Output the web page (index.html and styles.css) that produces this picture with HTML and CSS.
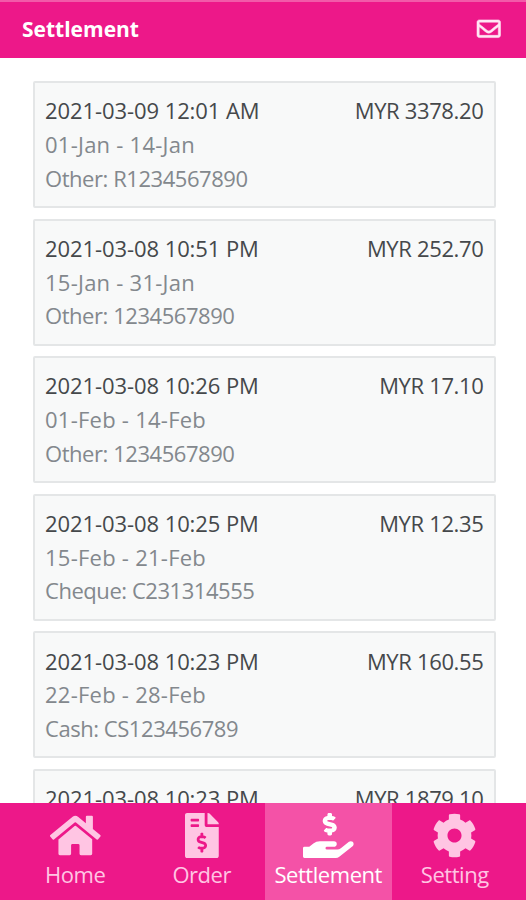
FILE: index.html
```
<!DOCTYPE html>
<html lang="en">
<head>
    <meta charset="UTF-8">
    <meta name="viewport" content="width=device-width, initial-scale=1.0">
    <title>Settlement</title>
    <link rel="stylesheet" href="styles.css">
</head>
<body>

<header class="topbar">
    <h1>Settlement</h1>
    <svg class="mail-icon" viewBox="0 0 512 512"><path d="M464 64H48C21.49 64 0 85.49 0 112v288c0 26.51 21.49 48 48 48h416c26.51 0 48-21.49 48-48V112c0-26.51-21.49-48-48-48zm0 48v40.805c-22.422 18.259-58.168 46.651-134.587 106.49-16.841 13.247-50.201 45.072-73.413 44.701-23.208.375-56.579-31.459-73.413-44.701C106.18 199.465 70.425 171.067 48 152.805V112h416zM48 400V214.398c22.914 18.251 55.409 43.862 104.938 82.646 21.857 17.205 60.134 55.186 103.062 54.955 42.717.231 80.509-37.199 103.053-54.947 49.528-38.783 82.032-64.401 104.947-82.653V400H48z"/></svg>
</header>

<main class="list">
    <div class="card">
        <div class="row"><span class="date">2021-03-09 12:01 AM</span><span class="amount">MYR 3378.20</span></div>
        <div class="period">01-Jan - 14-Jan</div>
        <div class="ref">Other: R1234567890</div>
    </div>
    <div class="card">
        <div class="row"><span class="date">2021-03-08 10:51 PM</span><span class="amount">MYR 252.70</span></div>
        <div class="period">15-Jan - 31-Jan</div>
        <div class="ref">Other: 1234567890</div>
    </div>
    <div class="card">
        <div class="row"><span class="date">2021-03-08 10:26 PM</span><span class="amount">MYR 17.10</span></div>
        <div class="period">01-Feb - 14-Feb</div>
        <div class="ref">Other: 1234567890</div>
    </div>
    <div class="card">
        <div class="row"><span class="date">2021-03-08 10:25 PM</span><span class="amount">MYR 12.35</span></div>
        <div class="period">15-Feb - 21-Feb</div>
        <div class="ref">Cheque: C231314555</div>
    </div>
    <div class="card">
        <div class="row"><span class="date">2021-03-08 10:23 PM</span><span class="amount">MYR 160.55</span></div>
        <div class="period">22-Feb - 28-Feb</div>
        <div class="ref">Cash: CS123456789</div>
    </div>
    <div class="card">
        <div class="row"><span class="date">2021-03-08 10:23 PM</span><span class="amount">MYR 1879.10</span></div>
    </div>
</main>

<nav class="tabbar">
    <a class="tab">
        <svg viewBox="0 0 576 512"><path d="M280.37 148.26L96 300.11V464a16 16 0 0 0 16 16l112.06-.29a16 16 0 0 0 15.92-16V368a16 16 0 0 1 16-16h64a16 16 0 0 1 16 16v95.64a16 16 0 0 0 16 16.05L464 480a16 16 0 0 0 16-16V300L295.67 148.26a12.19 12.19 0 0 0-15.3 0zM571.6 251.47L488 182.56V44.05a12 12 0 0 0-12-12h-56a12 12 0 0 0-12 12v72.61L318.47 43a48 48 0 0 0-61 0L4.34 251.47a12 12 0 0 0-1.6 16.9l25.5 31A12 12 0 0 0 45.15 301l235.22-193.74a12.19 12.19 0 0 1 15.3 0L530.9 301a12 12 0 0 0 16.9-1.6l25.5-31a12 12 0 0 0-1.7-16.93z"/></svg>
        <span>Home</span>
    </a>
    <a class="tab">
        <svg viewBox="0 0 384 512"><path d="M377 105L279.1 7c-4.5-4.5-10.6-7-17-7H256v128h128v-6.1c0-6.3-2.5-12.4-7-16.9zm-153 31V0H24C10.7 0 0 10.7 0 24v464c0 13.3 10.7 24 24 24h336c13.3 0 24-10.7 24-24V160H248c-13.2 0-24-10.8-24-24zM64 72c0-4.42 3.58-8 8-8h80c4.42 0 8 3.58 8 8v16c0 4.42-3.58 8-8 8H72c-4.42 0-8-3.58-8-8V72zm0 80v-16c0-4.42 3.58-8 8-8h80c4.42 0 8 3.58 8 8v16c0 4.42-3.58 8-8 8H72c-4.42 0-8-3.58-8-8zm144 263.88V440c0 4.42-3.58 8-8 8h-16c-4.42 0-8-3.58-8-8v-24.29c-11.29-.58-22.27-4.52-31.37-11.35-3.9-2.93-4.1-8.77-.57-12.14l11.75-11.21c2.77-2.64 6.89-2.76 10.13-.73 3.87 2.42 8.26 3.72 12.82 3.72h28.11c6.5 0 11.8-5.92 11.8-13.19 0-5.95-3.61-11.19-8.77-12.73l-45-13.5c-18.59-5.58-31.58-23.42-31.58-43.39 0-24.52 19.05-44.44 42.67-45.07V232c0-4.42 3.58-8 8-8h16c4.42 0 8 3.58 8 8v24.29c11.29.58 22.27 4.51 31.37 11.35 3.9 2.93 4.1 8.77.57 12.14l-11.75 11.21c-2.77 2.64-6.89 2.76-10.13.73-3.87-2.43-8.26-3.72-12.82-3.72h-28.11c-6.5 0-11.8 5.92-11.8 13.19 0 5.95 3.61 11.19 8.77 12.73l45 13.5c18.59 5.58 31.58 23.42 31.58 43.39 0 24.53-19.05 44.44-42.67 45.07z"/></svg>
        <span>Order</span>
    </a>
    <a class="tab active">
        <svg viewBox="0 0 576 512"><path d="M271.06,144.3l54.27,14.3a8.59,8.59,0,0,1,6.63,8.1c0,4.6-4.09,8.4-9.12,8.4h-35.6a30,30,0,0,1-11.19-2.2c-5.24-2.2-11.28-1.7-15.3,2l-19,17.5a11.68,11.68,0,0,0-2.25,2.66,11.42,11.42,0,0,0,3.88,15.74,83.77,83.77,0,0,0,34.51,11.5V240c0,8.8,7.83,16,17.37,16h17.37c9.55,0,17.38-7.2,17.38-16V222.4c32.93-3.6,57.84-31,53.5-63-3.15-23-22.46-41.3-46.56-47.7L282.68,97.4a8.59,8.59,0,0,1-6.63-8.1c0-4.6,4.09-8.4,9.12-8.4h35.6A30,30,0,0,1,332,83.1c5.23,2.2,11.28,1.7,15.3-2l19-17.5A11.31,11.31,0,0,0,368.47,61a11.43,11.43,0,0,0-3.84-15.78,83.82,83.82,0,0,0-34.52-11.5V16c0-8.8-7.82-16-17.37-16H295.37C285.82,0,278,7.2,278,16V33.6c-32.89,3.6-57.85,31-53.51,63C227.63,119.6,247,137.9,271.06,144.3ZM565.27,328.1c-11.8-10.7-30.2-10-42.6,0L430.27,402a63.64,63.64,0,0,1-40,14H272a16,16,0,0,1,0-32h78.29c15.9,0,30.71-10.9,33.25-26.6a31.2,31.2,0,0,0,.46-5.46A32,32,0,0,0,352,320H192a117.66,117.66,0,0,0-74.1,26.29L71.4,384H16A16,16,0,0,0,0,400v96a16,16,0,0,0,16,16H372.77a64,64,0,0,0,40-14L564,377a32,32,0,0,0,1.28-48.9Z"/></svg>
        <span>Settlement</span>
    </a>
    <a class="tab">
        <svg viewBox="0 0 512 512"><path d="M487.4 315.7l-42.6-24.6c4.3-23.2 4.3-47 0-70.2l42.6-24.6c4.9-2.8 7.1-8.6 5.5-14-11.1-35.6-30-67.8-54.7-94.6-3.8-4.1-10-5.1-14.8-2.3L380.8 110c-17.9-15.4-38.5-27.3-60.8-35.1V25.8c0-5.6-3.9-10.5-9.4-11.7-36.7-8.2-74.3-7.8-109.2 0-5.5 1.2-9.4 6.1-9.4 11.7V75c-22.2 7.9-42.8 19.8-60.8 35.1L88.7 85.5c-4.9-2.8-11-1.9-14.8 2.3-24.7 26.7-43.6 58.9-54.7 94.6-1.7 5.4.6 11.2 5.5 14L67.3 221c-4.3 23.2-4.3 47 0 70.2l-42.6 24.6c-4.9 2.8-7.1 8.6-5.5 14 11.1 35.6 30 67.8 54.7 94.6 3.8 4.1 10 5.1 14.8 2.3l42.6-24.6c17.9 15.4 38.5 27.3 60.8 35.1v49.2c0 5.6 3.9 10.5 9.4 11.7 36.7 8.2 74.3 7.8 109.2 0 5.5-1.2 9.4-6.1 9.4-11.7v-49.2c22.2-7.9 42.8-19.8 60.8-35.1l42.6 24.6c4.9 2.8 11 1.9 14.8-2.3 24.7-26.7 43.6-58.9 54.7-94.6 1.5-5.5-.7-11.3-5.6-14.1zM256 336c-44.1 0-80-35.9-80-80s35.9-80 80-80 80 35.9 80 80-35.9 80-80 80z"/></svg>
        <span>Setting</span>
    </a>
</nav>

</body>
</html>
```
FILE: styles.css
```
* {
    box-sizing: border-box;
}
body {
    margin: 0;
    height: 100vh;
    display: flex;
    flex-direction: column;
    overflow: hidden;
    font-family: "Open Sans", "Noto Sans", sans-serif;
    font-size: 22px;
    line-height: 33.7px;
    color: #45484b;
    background-color: #ffffff;
}
.topbar {
    flex: none;
    height: 58px;
    display: flex;
    justify-content: space-between;
    align-items: center;
    padding: 0 26px 0 22px;
    border-top: 2px solid #f25aa9;
    background-color: #ed1889;
    color: #ffffff;
}
.topbar h1 {
    margin: 0;
    font-size: 21px;
    font-weight: 700;
}
.mail-icon {
    width: 23.5px;
    height: 23.5px;
    margin-bottom: 2px;
    overflow: visible;
    fill: #ffe6f4;
    stroke: #ffe6f4;
    stroke-width: 12;
}
.list {
    flex: 1;
    min-height: 0;
    overflow: hidden;
    padding: 23px 30px 0 32.5px;
}
.card {
    height: 127px;
    margin-bottom: 10.6px;
    padding: 11.3px 10.5px 0 10.5px;
    border: 2px solid #e4e6e7;
    border-radius: 2px;
    background-color: #f8f9f9;
}
.row {
    display: flex;
    justify-content: space-between;
}
.date {
    letter-spacing: -0.08px;
}
.amount {
    letter-spacing: -0.35px;
}
.period,
.ref {
    color: #83888d;
}
.period {
    letter-spacing: 0.25px;
}
.ref {
    letter-spacing: -0.45px;
}
.tabbar {
    flex: none;
    height: 97px;
    display: flex;
    padding: 0 8px 0 12px;
    background-color: #ed1889;
}
.tab {
    flex: 1;
    display: flex;
    flex-direction: column;
    align-items: center;
    padding-top: 10px;
    color: #ffc5e3;
    letter-spacing: -0.45px;
}
.tab svg {
    height: 45px;
    fill: currentColor;
}
.tab.active {
    background-color: #f452a7;
    color: #ffffff;
}
```
